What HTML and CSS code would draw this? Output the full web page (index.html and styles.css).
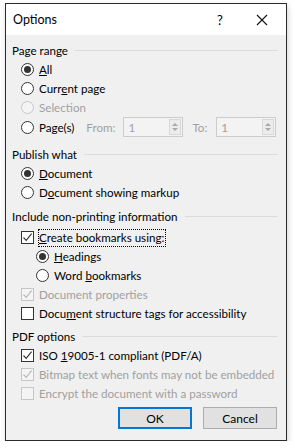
FILE: index.html
```html
<!DOCTYPE html>
<html>
<head>
    <title>Options</title>
    <link rel="stylesheet" href="styles.css">
</head>
<body>
    <div class="dialog">
        <div class="titlebar">
            <span class="title">Options</span>
            <span class="help">?</span>
            <span class="close">
                <svg width="12" height="12" viewBox="0 0 12 12"><path d="M1 1 L11 11 M11 1 L1 11" stroke="#111" stroke-width="1.1" fill="none"/></svg>
            </span>
        </div>

        <div class="content">
            <div class="group-head first"><span>Page range</span><div class="rule"></div></div>
            <div class="row"><span class="radio on"></span><span><u>A</u>ll</span></div>
            <div class="row"><span class="radio"></span><span>Curr<u>e</u>nt page</span></div>
            <div class="row disabled"><span class="radio"></span><span>Selection</span></div>
            <div class="row pages">
                <span class="radio"></span><span>Pa<u>g</u>e(s)</span>
                <span class="lbl from">From:</span>
                <span class="spin"><span class="val">1</span><span class="arrows"><i class="up"></i><i class="down"></i></span></span>
                <span class="lbl to">To:</span>
                <span class="spin"><span class="val">1</span><span class="arrows"><i class="up"></i><i class="down"></i></span></span>
            </div>

            <div class="group-head gap9"><span>Publish what</span><div class="rule"></div></div>
            <div class="row"><span class="radio on"></span><span><u>D</u>ocument</span></div>
            <div class="row"><span class="radio"></span><span>D<u>o</u>cument showing markup</span></div>

            <div class="group-head gap5"><span>Include non-printing information</span><div class="rule"></div></div>
            <div class="row gap3"><span class="check on"><svg viewBox="0 0 11 11"><path d="M1.5 5.5 L4.2 8.3 L9.6 1.6"/></svg></span><span class="focus"><u>C</u>reate bookmarks using:</span></div>
            <div class="row sub"><span class="radio on"></span><span><u>H</u>eadings</span></div>
            <div class="row sub"><span class="radio"></span><span>Word <u>b</u>ookmarks</span></div>
            <div class="row disabled"><span class="check on"><svg viewBox="0 0 11 11"><path d="M1.5 5.5 L4.2 8.3 L9.6 1.6"/></svg></span><span>Document properties</span></div>
            <div class="row"><span class="check"></span><span>Docu<u>m</u>ent structure tags for accessibility</span></div>

            <div class="group-head gap4"><span>PDF options</span><div class="rule"></div></div>
            <div class="row"><span class="check on"><svg viewBox="0 0 11 11"><path d="M1.5 5.5 L4.2 8.3 L9.6 1.6"/></svg></span><span>ISO <u>1</u>9005-1 compliant (PDF/A)</span></div>
            <div class="row disabled"><span class="check on"><svg viewBox="0 0 11 11"><path d="M1.5 5.5 L4.2 8.3 L9.6 1.6"/></svg></span><span>Bitmap text when fonts may not be embedded</span></div>
            <div class="row disabled"><span class="check"></span><span>Encrypt the document with a password</span></div>

            <div class="buttons">
                <button class="btn default">OK</button>
                <button class="btn">Cancel</button>
            </div>
        </div>
    </div>
</body>
</html>
```

FILE: styles.css
```css
body {
    margin: 0;
    background: #ffffff;
    font-family: Lato, "Noto Sans", sans-serif;
    font-size: 11.6px;
    color: #000;
}
.dialog {
    margin: 3px 0 0 5px;
    width: 280px;
    height: 436px;
    border: 1px solid #2b2b2b;
    background: #f0f0f0;
    box-shadow: 1px 3px 6px rgba(0, 0, 0, 0.18);
    display: flex;
    flex-direction: column;
}
.titlebar {
    height: 31px;
    background: #fff;
    display: flex;
    align-items: center;
    padding-left: 7px;
    flex-shrink: 0;
}
.title {
    flex: 1;
    font-size: 12.5px;
}
.help {
    width: 20px;
    text-align: center;
    font-size: 13px;
    margin-right: 26px;
}
.close {
    width: 12px;
    height: 12px;
    margin-right: 18px;
    display: flex;
}
.content {
    padding: 6px 8px 0 6px;
    display: flex;
    flex-direction: column;
}
.group-head {
    height: 19px;
    display: flex;
    align-items: center;
    white-space: nowrap;
}
.group-head .rule {
    flex: 1;
    height: 1px;
    background: #dcdcdc;
    margin-left: 7px;
}
.gap9 { margin-top: 8px; }
.gap5 { margin-top: 5px; }
.gap4 { margin-top: 4px; }
.gap3 { margin-top: 2px; }
.row {
    height: 19px;
    display: flex;
    align-items: center;
    padding-left: 9px;
    white-space: nowrap;
}
.row.sub {
    padding-left: 24px;
}
.row.disabled {
    color: #a0a0a0;
}
.radio {
    width: 11px;
    height: 11px;
    border: 1px solid #333;
    border-radius: 50%;
    background: #fff;
    margin-right: 5px;
    display: flex;
    align-items: center;
    justify-content: center;
    flex-shrink: 0;
}
.radio.on::after {
    content: "";
    width: 7px;
    height: 7px;
    border-radius: 50%;
    background: #333;
}
.disabled .radio {
    border-color: #c6c6c6;
    background: #f4f4f4;
}
.check {
    width: 11px;
    height: 11px;
    border: 1px solid #333;
    background: #fff;
    margin-right: 5px;
    flex-shrink: 0;
    display: flex;
}
.check svg {
    width: 11px;
    height: 11px;
}
.check path {
    fill: none;
    stroke: #333;
    stroke-width: 1.1;
}
.disabled .check {
    border-color: #c6c6c6;
    background: #f4f4f4;
}
.disabled .check path {
    stroke: #b8b8b8;
}
.focus {
    outline: 1px dotted #000;
    outline-offset: 0;
    padding: 0 1px 0 0;
    line-height: 16px;
}
.pages {
    height: 20px;
}
.lbl {
    color: #a0a0a0;
}
.from {
    margin-left: 12px;
    margin-right: 8px;
}
.to {
    margin-left: 9px;
    margin-right: 9px;
}
.spin {
    width: 58px;
    height: 18px;
    border: 1px solid #cccccc;
    background: #f3f3f3;
    display: flex;
    align-items: center;
    color: #a0a0a0;
}
.spin .val {
    flex: 1;
    padding-left: 4px;
}
.arrows {
    width: 12px;
    height: 16px;
    margin-right: 1px;
    border: 1px solid #d8d8d8;
    box-sizing: border-box;
    display: flex;
    flex-direction: column;
    align-items: center;
    justify-content: center;
    gap: 2px;
    background: #ececec;
}
.arrows i {
    width: 0;
    height: 0;
    border-left: 3px solid transparent;
    border-right: 3px solid transparent;
}
.arrows .up {
    border-bottom: 3px solid #a8a8a8;
}
.arrows .down {
    border-top: 3px solid #a8a8a8;
}
.buttons {
    display: flex;
    justify-content: flex-end;
    gap: 11px;
    margin-top: 4px;
    padding-right: 1px;
}
.btn {
    width: 74px;
    height: 22px;
    font-family: inherit;
    font-size: 12px;
    background: #e1e1e1;
    border: 1px solid #adadad;
    padding: 0;
}
.btn.default {
    border: 2px solid #0078d7;
}
```
